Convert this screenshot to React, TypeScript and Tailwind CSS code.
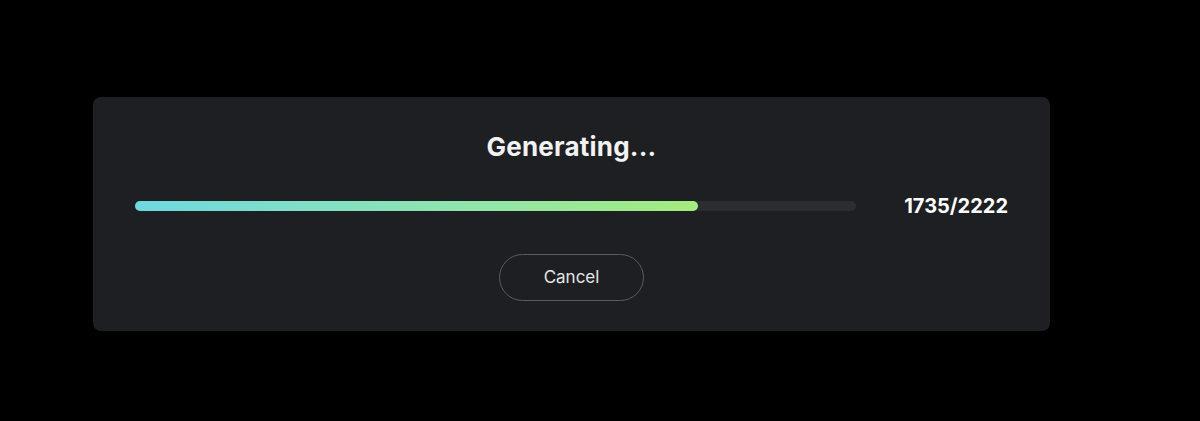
const done = 1735;
const total = 2222;

export default function App() {
  const pct = (done / total) * 100;

  return (
    <div className="min-h-[421px] w-full bg-black pt-[97px] pl-[93px] font-['Inter','Liberation_Sans',sans-serif]">
      <div className="flex h-[234px] w-[957px] flex-col items-center rounded-[8px] bg-[#1e1f23] px-[42px] pt-[34px]">
        <h2 className="text-[26px] font-bold leading-[32px] tracking-[0.2px] text-[#f2f2f2]">Generating...</h2>
        <div className="mt-[31px] flex w-full items-center justify-between">
          <div className="h-[10px] w-[721px] rounded-full bg-[#2c2d31]">
            <div
              className="h-full rounded-full bg-gradient-to-r from-[#6fd8e0] to-[#a5ec7c]"
              style={{ width: `${pct}%` }}
            />
          </div>
          <span className="text-[20px] font-bold leading-[24px] text-white">
            {done}/{total}
          </span>
        </div>
        <button
          className="mt-[36px] h-[47px] w-[145px] rounded-full border border-[#5a5b5f] text-[17px] font-normal text-[#e6e6e6]"
          type="button"
        >
          Cancel
        </button>
      </div>
    </div>
  );
}
